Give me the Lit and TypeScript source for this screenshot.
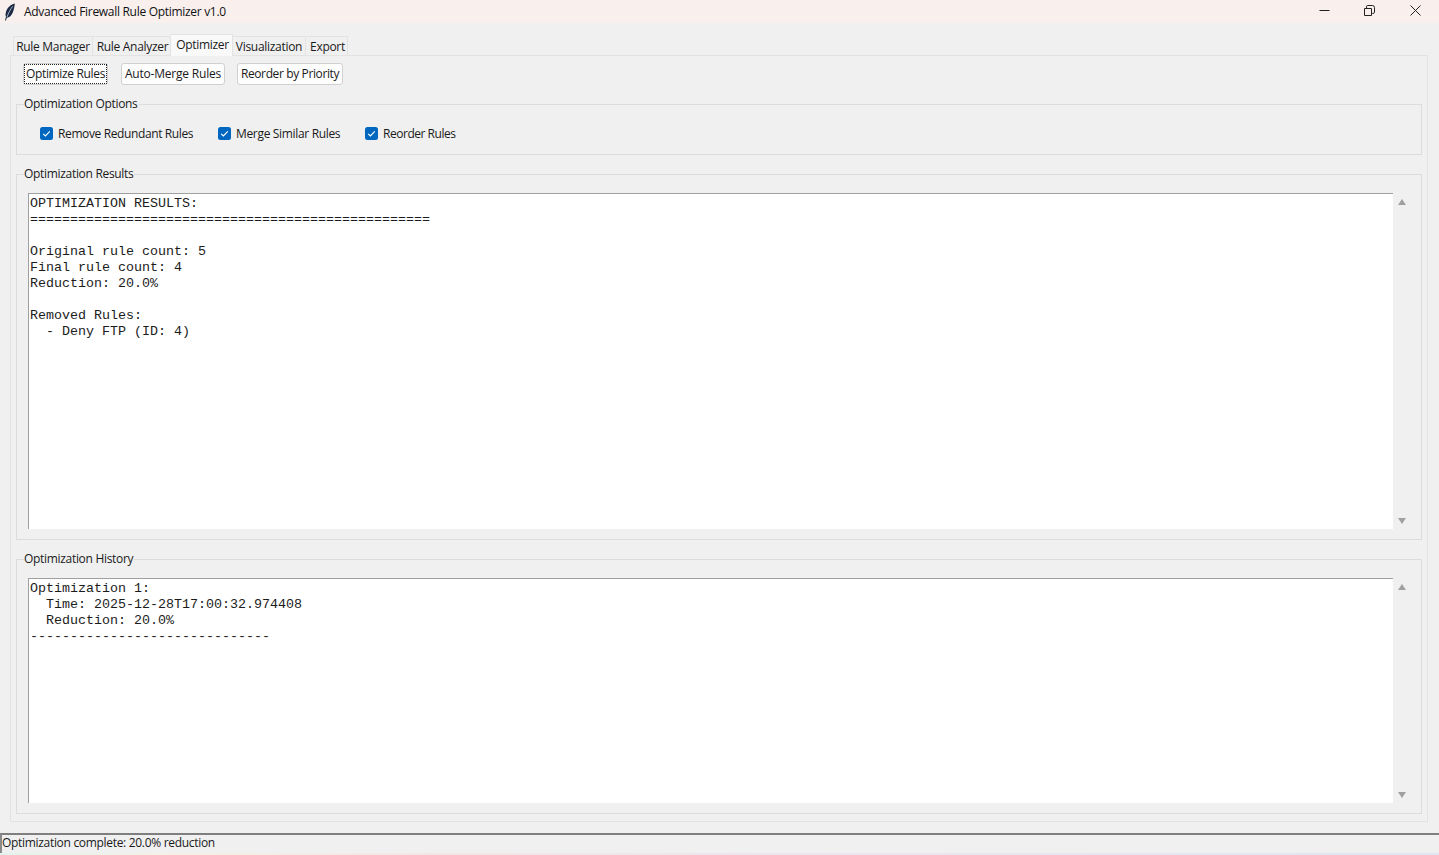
import { LitElement, html, css } from "lit";
import { customElement } from "lit/decorators.js";

const RESULTS = `OPTIMIZATION RESULTS:
==================================================

Original rule count: 5
Final rule count: 4
Reduction: 20.0%

Removed Rules:
  - Deny FTP (ID: 4)`;

const HISTORY = `Optimization 1:
  Time: 2025-12-28T17:00:32.974408
  Reduction: 20.0%
------------------------------`;

const check = html`<svg class="check" width="13" height="13" viewBox="0 0 13 13"><path d="M3.2 6.8 5.4 9 9.8 4.4" fill="none" stroke="#fff" stroke-width="1.1"/></svg>`;

@customElement("app-root")
export class AppRoot extends LitElement {
  static styles = css`
    :host {
      display: flex;
      flex-direction: column;
      width: 1439px;
      height: 855px;
      overflow: hidden;
      background: #f0f0f0;
      color: #1a1a1a;
      font-family: "Open Sans", "Noto Sans", sans-serif;
      font-size: 12px;
      letter-spacing: -0.38px;
    }
    .title {
      height: 23px;
      flex: none;
      display: flex;
      align-items: center;
      background: #f9f0ee;
      padding-left: 4px;
    }
    .feather { flex: none; }
    .title-text { margin-left: 8px; flex: 1; letter-spacing: -0.3px; color: #111; }
    .wc { display: flex; margin-right: 1px; }
    .wc span { width: 46px; height: 23px; box-sizing: border-box; padding-bottom: 2px; display: flex; align-items: center; justify-content: center; }
    .wc span.min { padding-left: 2px; }
    .tabs {
      display: flex;
      align-items: flex-end;
      height: 32px;
      flex: none;
      padding-left: 13px;
    }
    .tab {
      height: 19px;
      line-height: 20px;
      box-sizing: border-box;
      border: 1px solid #e3e3e3;
      border-bottom: none;
      border-left: none;
      text-align: center;
      white-space: nowrap;
      letter-spacing: -0.3px;
    }
    .tab:first-child { border-left: 1px solid #e3e3e3; }
    .tab.sel {
      height: 22px;
      line-height: 20px;
      background: #f9f9f9;
      margin-bottom: -1px;
      position: relative;
    }
    .t1 { width: 80px; }
    .t2 { width: 78px; padding-left: 2px; }
    .t3 { width: 62px; padding-left: 2px; }
    .t4 { width: 73px; }
    .t5 { width: 42px; padding-left: 2px; }
    .pane {
      flex: none;
      height: 767px;
      margin: 0 11px 0 10px;
      box-sizing: border-box;
      border: 1px solid #e3e3e3;
      padding: 7px 5px 6px 5px;
      display: flex;
      flex-direction: column;
    }
    .btns { display: flex; height: 22px; flex: none; padding-left: 7px; }
    .btn {
      box-sizing: border-box;
      height: 22px;
      background: #fdfdfd;
      border: 1px solid #d0d0d0;
      border-radius: 3px;
      font: inherit;
      letter-spacing: inherit;
      color: inherit;
      padding: 0 0 1px;
      display: flex;
      align-items: center;
      justify-content: center;
      white-space: nowrap;
    }
    .btn.focus { width: 85px; margin-right: 13px; padding: 0; }
    .btn.focus span {
      border: 1px dotted #222;
      line-height: 18px;
      height: 20px;
      width: 83px;
      box-sizing: border-box;
      display: block;
      white-space: nowrap;
      text-align: center;
      letter-spacing: -0.34px;
    }
    .btn.b2 { width: 104px; margin-right: 12px; letter-spacing: -0.2px; }
    .btn.b3 { width: 106px; }
    .frame {
      box-sizing: border-box;
      border: 1px solid #dcdcdc;
      flex: none;
    }
    .legend {
      width: fit-content;
      margin: -9px 0 0 7px;
      padding: 0 1px 0 0;
      height: 16px;
      line-height: 16px;
      background: #f0f0f0;
      letter-spacing: -0.31px;
    }
    .f-opts { margin-top: 19px; height: 51px; }
    .opts { display: flex; padding: 13px 0 0 23px; align-items: center; height: 16px; }
    .opt { display: flex; align-items: center; }
    .opt.o1 { width: 178px; }
    .opt.o2 { width: 147px; letter-spacing: -0.33px; }
    .opt.o3 { letter-spacing: -0.47px; }
    .box {
      width: 13px;
      height: 13px;
      background: #0067c0;
      border-radius: 2.5px;
      margin-right: 5px;
      flex: none;
      display: block;
    }
    .check { display: block; }
    .f-res { margin-top: 19px; height: 366px; }
    .f-his { margin-top: 19px; height: 255px; }
    .inner { display: flex; margin-top: 11px; padding: 0 10px 0 11px; box-sizing: border-box; }
    .f-res .inner { height: 336px; }
    .f-his .inner { height: 225px; }
    .text {
      flex: 1;
      box-sizing: border-box;
      background: #fff;
      border-left: 1px solid #a0a0a0;
      border-top: 1px solid #a0a0a0;
      padding: 2px 1px 0;
      margin: 0;
      font-family: "Liberation Mono", monospace;
      font-size: 13.33px;
      line-height: 16px;
      letter-spacing: 0;
      color: #1c1c1c;
      white-space: pre;
      overflow: hidden;
    }
    .sb {
      width: 18px;
      flex: none;
      display: flex;
      flex-direction: column;
      justify-content: space-between;
      align-items: center;
      padding: 6px 0 5px;
      box-sizing: border-box;
    }
    .sb svg { display: block; }
    .status {
      margin-top: 11px;
      flex: none;
      height: 20px;
      box-sizing: border-box;
      border-top: 2px solid #7f7f7f;
      border-left: 2px solid #8a8a8a;
      line-height: 16px;
      white-space: nowrap;
      letter-spacing: -0.31px;
    }
    .strip {
      flex: 1;
      background: linear-gradient(90deg, #dff5ec 0%, #f6f0e4 12%, #f4e6e6 30%, #ece6f0 60%, #dfe6f4 100%);
    }
  `;

  render() {
    const up = html`<svg width="8" height="6" viewBox="0 0 8 6"><path d="M4 0 8 6H0Z" fill="#a0a0a0"/></svg>`;
    const down = html`<svg width="8" height="6" viewBox="0 0 8 6"><path d="M0 0H8L4 6Z" fill="#a0a0a0"/></svg>`;
    return html`
      <div class="title">
        <svg class="feather" width="12" height="18" viewBox="0 0 12 18">
          <path d="M10.8 .6C7 1.4 3.6 4.4 2.2 8.2 1.4 10.4 1.4 12.6 2 14 1.6 15 1.3 16.2 1.1 17.4L2 17.6C2.2 16.6 2.5 15.6 2.9 14.8 5.4 14.6 7.6 12.6 8.8 9.6 9.8 7 10.6 3.6 10.8 .6Z" fill="#1c2a44"/>
          <path d="M8.6 3.4C6.4 6.4 4.4 10 3 14" fill="none" stroke="#c9d4e6" stroke-width=".8"/>
        </svg>
        <span class="title-text">Advanced Firewall Rule Optimizer v1.0</span>
        <div class="wc">
          <span class="min"><svg width="11" height="11" viewBox="0 0 11 11"><path d="M.5 5.5H10.5" stroke="#222" fill="none"/></svg></span>
          <span><svg width="11" height="11" viewBox="0 0 11 11"><path d="M.5 3.5H7.5V10.5H.5ZM2.5 3.5V1.8Q2.5.5 3.8.5H8.5Q10.5.5 10.5 2.5V7.2Q10.5 8.5 8.5 8.5H7.5" stroke="#222" fill="none"/></svg></span>
          <span><svg width="11" height="11" viewBox="0 0 11 11"><path d="M.5.5 10.5 10.5M10.5.5.5 10.5" stroke="#222" fill="none"/></svg></span>
        </div>
      </div>
      <div class="tabs">
        <div class="tab t1">Rule Manager</div>
        <div class="tab t2">Rule Analyzer</div>
        <div class="tab sel t3">Optimizer</div>
        <div class="tab t4">Visualization</div>
        <div class="tab t5">Export</div>
      </div>
      <div class="pane">
        <div class="btns">
          <button class="btn focus"><span>Optimize Rules</span></button>
          <button class="btn b2">Auto-Merge Rules</button>
          <button class="btn b3">Reorder by Priority</button>
        </div>
        <div class="frame f-opts">
          <div class="legend">Optimization Options</div>
          <div class="opts">
            <div class="opt o1"><span class="box">${check}</span>Remove Redundant Rules</div>
            <div class="opt o2"><span class="box">${check}</span>Merge Similar Rules</div>
            <div class="opt o3"><span class="box">${check}</span>Reorder Rules</div>
          </div>
        </div>
        <div class="frame f-res">
          <div class="legend">Optimization Results</div>
          <div class="inner">
            <pre class="text">${RESULTS}</pre>
            <div class="sb">${up}${down}</div>
          </div>
        </div>
        <div class="frame f-his">
          <div class="legend">Optimization History</div>
          <div class="inner">
            <pre class="text">${HISTORY}</pre>
            <div class="sb">${up}${down}</div>
          </div>
        </div>
      </div>
      <div class="status">Optimization complete: 20.0% reduction</div>
      <div class="strip"></div>
    `;
  }
}
